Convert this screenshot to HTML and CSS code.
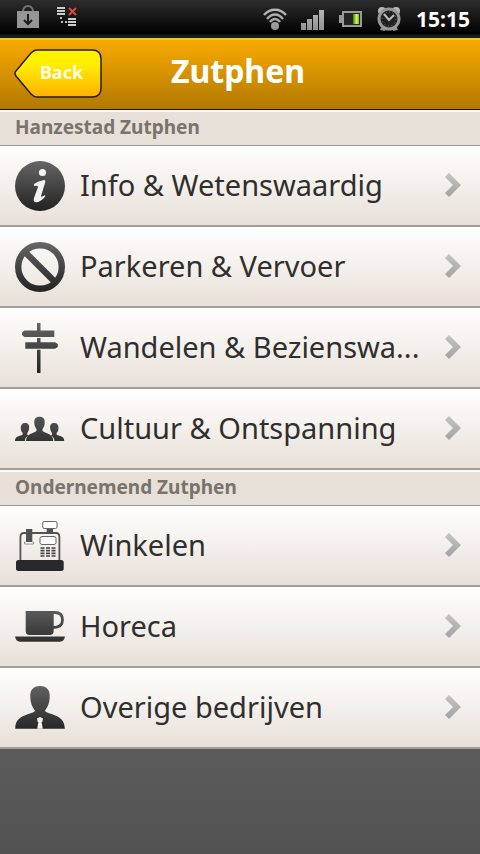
FILE: index.html
```html
<!DOCTYPE html>
<html lang="nl">
<head>
<meta charset="utf-8">
<meta name="viewport" content="width=device-width, initial-scale=1">
<title>Zutphen</title>
<link rel="stylesheet" href="styles.css">
</head>
<body>
<svg class="defs" aria-hidden="true">
  <defs>
    <linearGradient id="dark" gradientUnits="userSpaceOnUse" x1="0" y1="0" x2="0" y2="50"><stop offset="0" stop-color="#666"/><stop offset="0.5" stop-color="#444"/><stop offset="1" stop-color="#222"/></linearGradient>
    <linearGradient id="silver" gradientUnits="userSpaceOnUse" x1="0" y1="0" x2="0" y2="24"><stop offset="0" stop-color="#bbb"/><stop offset="1" stop-color="#909090"/></linearGradient>
    <linearGradient id="arrow" x1="0" y1="0" x2="0" y2="1"><stop offset="0" stop-color="#c4c4c2"/><stop offset="1" stop-color="#a4a3a1"/></linearGradient>
    <linearGradient id="yellow" x1="0" y1="0" x2="0" y2="1"><stop offset="0" stop-color="#fff200"/><stop offset="0.3" stop-color="#fff000"/><stop offset="1" stop-color="#ffb000"/></linearGradient>
    <linearGradient id="charge" x1="0" y1="0" x2="1" y2="0"><stop offset="0" stop-color="#4d7a10"/><stop offset="0.6" stop-color="#c8ff50"/><stop offset="1" stop-color="#79b51c"/></linearGradient>
    <symbol id="chevron" viewBox="0 0 16 24"><path d="M4 0 16 12 4 24 0 20 8 12 0 4Z" fill="url(#arrow)"/></symbol>
  </defs>
</svg>

<div class="status">
  <div class="status-group notices">
    <svg width="22" height="24" viewBox="0 0 22 24"><path d="M6 7C6 -1 16 -1 16 7" fill="none" stroke="#777" stroke-width="2"/><path d="M0 6H22V23H0Z" fill="#969696"/><path d="M11 9V19M7 15 11 19 15 15" fill="none" stroke="#1c1c1c" stroke-width="2"/></svg>
    <svg width="20" height="20" viewBox="0 0 20 20"><path d="M0 1H8M0 4H8M0 7H8M11 12H19M11 15H19M11 18H19" stroke="#ccc" stroke-width="2" fill="none"/><path d="M3 10H5V12H3ZM4 14H6V16H4ZM8 14H10V16H8Z" fill="#bbb"/><path d="M12 1 19 8M19 1 12 8" stroke="#e0453e" stroke-width="2"/></svg>
  </div>
  <div class="status-group">
    <svg width="24" height="24" viewBox="0 0 24 24"><g fill="none" stroke="url(#silver)" stroke-width="2.5"><path d="M1 8C7 1 17 1 23 8"/><path d="M4 12C9 6 15 6 20 12"/><path d="M7 15C10 11 14 11 17 15"/></g><circle cx="12" cy="19" r="4" fill="url(#silver)"/></svg>
    <svg width="24" height="24" viewBox="0 0 24 24"><path d="M0 16H5V23H0ZM6 12H11V23H6ZM12 8H17V23H12ZM18 3H23V23H18Z" fill="url(#silver)"/></svg>
    <svg width="24" height="24" viewBox="0 0 24 24"><path d="M3 4H23V20H3V16H0V8H3Z" fill="#999"/><path d="M5 6H21V18H5Z" fill="#242424"/><path d="M14 7H20V17H14Z" fill="url(#charge)"/></svg>
    <svg width="24" height="24" viewBox="0 0 24 24"><g fill="url(#silver)"><circle cx="5" cy="4" r="4"/><circle cx="19" cy="4" r="4"/><path d="M3 23 5 19H9L8 24ZM21 23 19 19H15L16 24Z"/></g><circle cx="12" cy="12" r="10" fill="#202020" stroke="#989898" stroke-width="3"/><circle cx="12" cy="12" r="7" fill="none" stroke="#777" stroke-width="1" stroke-dasharray="1 2.67"/><path d="M7 7 12 13 17 8" fill="none" stroke="#bbb" stroke-width="2"/></svg>
    <span class="clock">15:15</span>
  </div>
</div>

<header class="titlebar">
  <button class="back" type="button">
    <svg class="back-shape" width="88" height="49" viewBox="0 0 88 49" aria-hidden="true"><path d="M23 1H78Q87 1 87 10V39Q87 48 78 48H23Q20 48 17 45L2 27Q0 24 2 22L17 4Q20 1 23 1Z" fill="url(#yellow)" stroke="#251c08" stroke-width="1.5"/></svg>
    <span class="back-label">Back</span>
  </button>
  <h1>Zutphen</h1>
</header>

<main>
  <section>
    <h2>Hanzestad Zutphen</h2>
    <ul>
      <li><a href="#info">
        <svg class="icon" viewBox="0 0 50 50"><circle cx="25" cy="25" r="25" fill="url(#dark)"/><circle cx="27.5" cy="11.5" r="3.6" fill="#f5f3f1"/><path d="M19 23Q23 20 29 19Q31 19 30 22L26 35Q26 37 30 34Q31 35 29 37Q24 42 20 41Q18 40 19 37L23 26Q23 24 19 25Z" fill="#f5f3f1"/></svg>
        <span class="label">Info &amp; Wetenswaardig</span><svg class="chevron"><use href="#chevron"/></svg></a></li>
      <li><a href="#parkeren">
        <svg class="icon" viewBox="0 0 50 50"><g fill="none" stroke="url(#dark)" stroke-width="6.4"><circle cx="25" cy="25" r="21.8"/><path d="M10 10 40 40"/></g></svg>
        <span class="label">Parkeren &amp; Vervoer</span><svg class="chevron"><use href="#chevron"/></svg></a></li>
      <li><a href="#wandelen">
        <svg class="icon" viewBox="0 0 50 50"><path d="M22 0H25.5V7.6H39.3V14H25.5V19.2H40L42.8 21V24L40 25.7H25.5V50H22V25.7H10.3V19.2H22V14H9.5L7 12V9.5L9.5 7.6H22Z" fill="url(#dark)"/><path d="M22 14.5H26M22 26.2H26" stroke="#f5f3f1" stroke-width="1"/></svg>
        <span class="label">Wandelen &amp; Bezienswa...</span><svg class="chevron"><use href="#chevron"/></svg></a></li>
      <li><a href="#cultuur">
        <svg class="icon" viewBox="0 0 50 50"><g fill="url(#dark)"><path d="M24.5 12.7C28.5 12.7 30 15 29.7 19C29.5 22 28.5 24 27.5 25V27C30 29.5 38.3 29 38.3 37H11C11 29 19 29.5 21.5 27V25C20.5 24 19.5 22 19.3 19C19 15 20.5 12.7 24.5 12.7Z"/><path d="M10 19C13.2 19 14.4 21 14.2 24C14 26.5 13 28 12.3 29V31L13.5 31.5Q10 33 9.8 37H0C0 31.5 5 32.5 7.7 30.5V29C6.5 28 5.8 26 5.8 24C5.7 21 7 19 10 19Z"/><path d="M39.3 19C36.1 19 34.9 21 35.1 24C35.3 26.5 36.3 28 37 29V31L35.8 31.5Q39.3 33 39.5 37H49.3C49.3 31.5 44.3 32.5 41.6 30.5V29C42.8 28 43.5 26 43.5 24C43.6 21 42.3 19 39.3 19Z"/></g></svg>
        <span class="label">Cultuur &amp; Ontspanning</span><svg class="chevron"><use href="#chevron"/></svg></a></li>
    </ul>
  </section>
  <section>
    <h2>Ondernemend Zutphen</h2>
    <ul>
      <li><a href="#winkelen">
        <svg class="icon" viewBox="0 0 50 50"><rect x="1" y="39" width="47.7" height="11" rx="2.5" fill="#272829"/><path d="M5.4 39V16Q5.4 12 9 12H41Q44.4 12 44.4 16V39" fill="none" stroke="#555" stroke-width="1.8"/><rect x="27.7" y="0.5" width="14.3" height="7" rx="1.5" fill="#fff" stroke="#666"/><path d="M31.7 8H38V12H31.7ZM11 8H17.3V21H11Z" fill="#505050"/><path d="M10.5 21H9.5V23H18.5V21H17.5" fill="#fff" stroke="#777" stroke-width="0.8"/><rect x="25" y="15.5" width="16" height="8" rx="2" fill="#fff" stroke="#666"/><path d="M25.5 27H40.5M25.5 29.7H40.5M25.5 32.4H40.5M25.5 35H40.5" stroke="#444" stroke-width="1.7" stroke-dasharray="4 1.5"/></svg>
        <span class="label">Winkelen</span><svg class="chevron"><use href="#chevron"/></svg></a></li>
      <li><a href="#horeca">
        <svg class="icon" viewBox="0 0 50 50"><path d="M10.7 9H38.7V29Q38.7 33 34.7 33H14.7Q10.7 33 10.7 29ZM0 34.5H50Q49 39.7 45 39.7H5Q1 39.7 0 34.5Z" fill="url(#dark)"/><path d="M38 10.5H40C45.5 10.5 47.5 14 47.5 18C47.5 23 44 25.5 38 25.5" fill="none" stroke="url(#dark)" stroke-width="2.8"/></svg>
        <span class="label">Horeca</span><svg class="chevron"><use href="#chevron"/></svg></a></li>
      <li><a href="#overige">
        <svg class="icon" viewBox="0 0 50 50"><path d="M25 3C32 3 35 7 34.7 14C34.5 21 32 25 30 27.5C31 32 50 30 49.8 45.7H0.3C0 30 19 32 20 27.5C18 25 15.5 21 15.3 14C15 7 18 3 25 3Z" fill="url(#dark)"/><path d="M22 35.5 25 34 28 35.5 27.3 39H26.6L27.8 45.7H22.2L23.4 39H22.7Z" fill="#f3f0ed"/></svg>
        <span class="label">Overige bedrijven</span><svg class="chevron"><use href="#chevron"/></svg></a></li>
    </ul>
  </section>
</main>
</body>
</html>
```
FILE: styles.css
```css
* { box-sizing: border-box; }

html { min-height: 100%; }

body {
  margin: 0;
  min-height: 100vh;
  background: linear-gradient(#888, #5b5b5b 750px, #525252);
  font-family: "Noto Sans", "Open Sans", sans-serif;
  color: #302f2e;
}

svg { display: block; flex: none; }

.defs { position: absolute; width: 0; height: 0; }

.status {
  display: flex;
  justify-content: space-between;
  align-items: center;
  height: 38px;
  padding: 0 10px 0 17px;
  background: linear-gradient(#2d2d2d, #000 34px, #151c19 35px);
}

.status-group { display: flex; align-items: center; gap: 14px; }

.notices { gap: 18px; padding-bottom: 4px; }

.clock {
  margin-left: 1px;
  color: #fff;
  font-size: 21px;
  font-weight: 700;
  line-height: 38px;
}

.titlebar {
  display: grid;
  grid-template-columns: 88px 1fr 92px;
  align-items: center;
  height: 72px;
  padding: 0 14px 3px;
  border-top: 2px solid #f4cc20;
  border-bottom: 1px solid #1c1200;
  background: linear-gradient(#f8aa00, #b27900);
}

.back {
  position: relative;
  height: 49px;
  padding: 0 0 2px 7px;
  border: 0;
  background: none;
  color: #fffde8;
  font: 700 18px/24px "Noto Sans", "Open Sans", sans-serif;
}

.back-shape { position: absolute; inset: 0; }

.back-label { position: relative; }

h1 {
  margin: 0;
  padding-bottom: 4px;
  color: #fff;
  font-size: 32px;
  line-height: 44px;
  text-align: center;
}

h2 {
  height: 36px;
  margin: 0;
  padding: 0 15px;
  border-top: 2px solid #faf8f5;
  border-bottom: 1px solid #a09d98;
  background: #e7e0d8;
  color: #78736d;
  font-size: 19px;
  line-height: 31px;
}

ul { margin: 0; padding: 0; list-style: none; }

a {
  display: flex;
  align-items: center;
  gap: 15px;
  height: 81px;
  padding: 0 19px 0 15px;
  border-bottom: 2px solid #a19e99;
  background: linear-gradient(#fff, #e8e0d8);
  color: inherit;
  text-decoration: none;
}

.icon { width: 50px; height: 50px; }

.label {
  flex: 1;
  min-width: 0;
  padding-bottom: 2px;
  font-size: 29px;
  line-height: 40px;
  white-space: nowrap;
}

.chevron { width: 16px; height: 24px; margin-bottom: 2px; }
```
